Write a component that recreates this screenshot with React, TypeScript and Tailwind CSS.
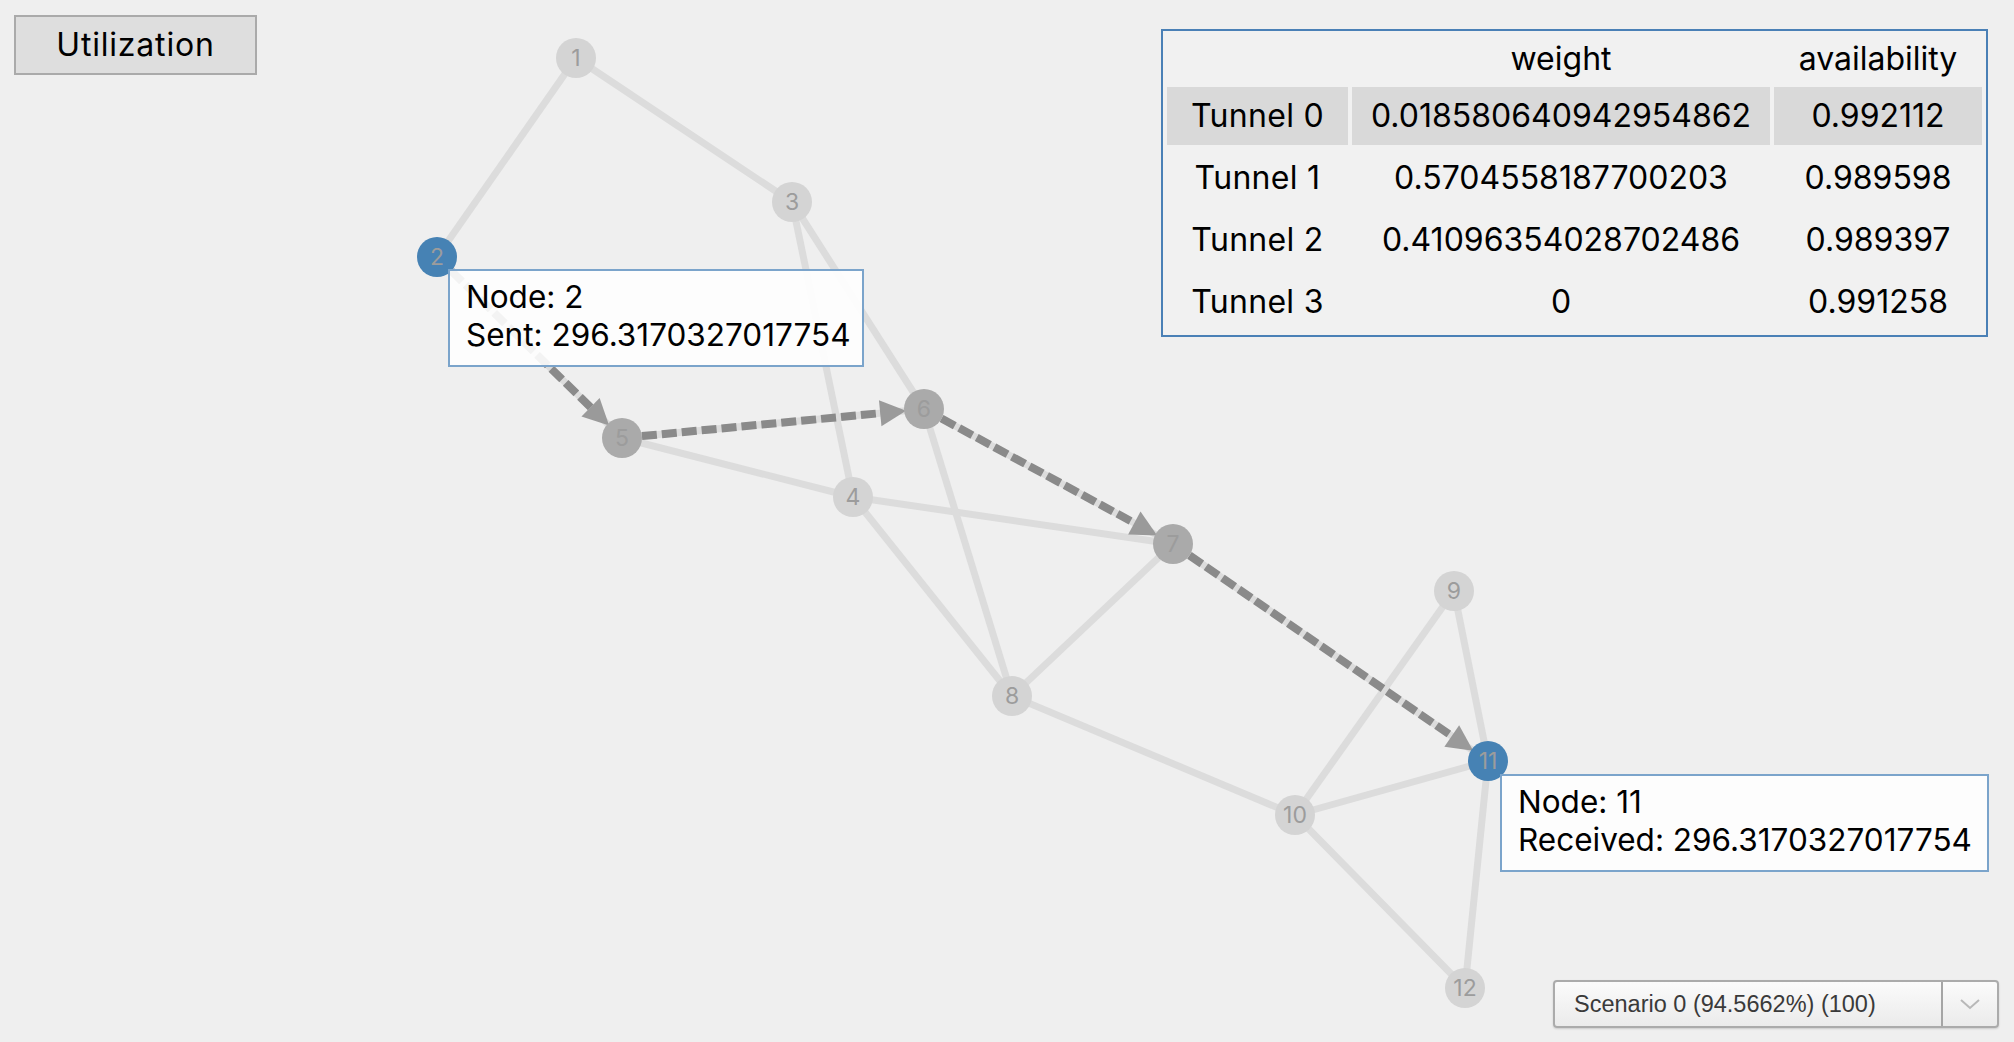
import React from "react";

type Pt = { x: number; y: number };

const nodes: Record<number, Pt> = {
  1: { x: 576, y: 58 },
  2: { x: 437, y: 257 },
  3: { x: 792, y: 202 },
  4: { x: 853, y: 497 },
  5: { x: 622, y: 438 },
  6: { x: 924, y: 409 },
  7: { x: 1173, y: 544 },
  8: { x: 1012, y: 696 },
  9: { x: 1454, y: 591 },
  10: { x: 1295, y: 815 },
  11: { x: 1488, y: 761 },
  12: { x: 1465, y: 988 },
};

const edges: [number, number][] = [
  [1, 2],
  [1, 3],
  [2, 5],
  [3, 4],
  [3, 6],
  [5, 4],
  [5, 6],
  [4, 7],
  [4, 8],
  [6, 8],
  [6, 7],
  [7, 8],
  [7, 11],
  [8, 10],
  [9, 10],
  [9, 11],
  [10, 11],
  [10, 12],
  [11, 12],
];

const path: [number, number][] = [
  [2, 5],
  [5, 6],
  [6, 7],
  [7, 11],
];

const onPath = [5, 6, 7];
const selected = [2, 11];
const R = 20;

const tunnels = [
  { name: "Tunnel 0", weight: "0.018580640942954862", avail: "0.992112" },
  { name: "Tunnel 1", weight: "0.5704558187700203", avail: "0.989598" },
  { name: "Tunnel 2", weight: "0.41096354028702486", avail: "0.989397" },
  { name: "Tunnel 3", weight: "0", avail: "0.991258" },
];

function PathEdge({ from, to }: { from: number; to: number }) {
  const s = nodes[from];
  const t = nodes[to];
  const len = Math.hypot(t.x - s.x, t.y - s.y);
  const dx = (t.x - s.x) / len;
  const dy = (t.y - s.y) / len;
  const tip = { x: t.x - dx * (R - 2), y: t.y - dy * (R - 2) };
  const base = { x: tip.x - dx * 26, y: tip.y - dy * 26 };
  const nx = -dy;
  const ny = dx;
  const pts = `${tip.x},${tip.y} ${base.x + nx * 13},${base.y + ny * 13} ${base.x - nx * 13},${base.y - ny * 13}`;
  return (
    <g>
      <line
        x1={s.x + dx * R}
        y1={s.y + dy * R}
        x2={base.x + dx * 2}
        y2={base.y + dy * 2}
        stroke="#8a8a8a"
        strokeWidth={8}
        strokeDasharray="15 5"
      />
      <polygon points={pts} fill="#9a9a9a" />
    </g>
  );
}

function Graph() {
  return (
    <svg className="absolute inset-0" width={2014} height={1042}>
      {edges.map(([a, b]) => (
        <line
          key={`${a}-${b}`}
          x1={nodes[a].x}
          y1={nodes[a].y}
          x2={nodes[b].x}
          y2={nodes[b].y}
          stroke="#dcdcdc"
          strokeWidth={7}
        />
      ))}
      {path.map(([a, b]) => (
        <PathEdge key={`p${a}-${b}`} from={a} to={b} />
      ))}
      {Object.entries(nodes).map(([id, p]) => {
        const n = Number(id);
        const fill = selected.includes(n)
          ? "#4682b4"
          : onPath.includes(n)
            ? "#aaaaaa"
            : "#d4d4d4";
        return (
          <g key={id}>
            <circle cx={p.x} cy={p.y} r={R} fill={fill} />
            <text
              x={p.x}
              y={p.y + 8}
              textAnchor="middle"
              fontSize={23}
              fill="#9c9c9c"
              fontFamily="Inter, sans-serif"
            >
              {id}
            </text>
          </g>
        );
      })}
    </svg>
  );
}

export default function App() {
  return (
    <div className="relative w-[2014px] h-[1042px] overflow-hidden bg-[#efefef] font-['Inter',sans-serif] text-black">
      <Graph />
      <div className="relative flex h-full flex-col justify-between">
        <div className="flex items-start justify-between pl-[14px] pr-[26px] pt-[15px]">
          <button className="flex h-[60px] w-[243px] items-center justify-center border-2 border-[#aaaaaa] bg-[#dedede] text-[32px] tracking-[0.8px]">
            Utilization
          </button>
          <div className="mt-[14px] border-2 border-[#4a80b6] bg-[#f1f1f1]">
            <table className="border-separate border-spacing-[4px] text-[32px]">
              <thead>
                <tr className="h-[46px]">
                  <th className="w-[181px] font-normal"></th>
                  <th className="w-[418px] font-normal">weight</th>
                  <th className="w-[208px] font-normal">availability</th>
                </tr>
              </thead>
              <tbody>
                {tunnels.map((t, i) => (
                  <tr key={t.name} className="h-[58px] text-center">
                    <td className={i === 0 ? "bg-[#d9d9d9] tracking-[0.3px]" : "tracking-[0.3px]"}>{t.name}</td>
                    <td className={i === 0 ? "bg-[#d9d9d9]" : ""}>{t.weight}</td>
                    <td className={i === 0 ? "bg-[#d9d9d9]" : ""}>{t.avail}</td>
                  </tr>
                ))}
              </tbody>
            </table>
          </div>
        </div>
        <div className="flex justify-end pb-[14px] pr-[15px]">
          <div className="flex h-[48px] w-[446px] items-stretch rounded-[4px] border-2 border-[#ababab] bg-gradient-to-b from-[#fbfbfb] to-[#ebebeb] shadow-[0_1px_2px_rgba(0,0,0,0.15)] font-['Liberation_Sans',sans-serif] text-[23.5px] text-[#3a3a3a]">
            <div className="flex flex-1 items-center pl-[19px] pt-[2px]">
              Scenario 0 (94.5662%) (100)
            </div>
            <div className="flex w-[56px] items-center justify-center border-l-2 border-[#a5a5a5]">
              <svg width="22" height="12" viewBox="0 0 22 12">
                <path d="M2 2 L11 10 L20 2" fill="none" stroke="#b8b8b8" strokeWidth="2" />
              </svg>
            </div>
          </div>
        </div>
      </div>
      <div className="absolute left-[448px] top-[269px] h-[98px] w-[416px] border-2 border-[#7ba4cb] bg-white/90 pl-[16px] pt-[7px] text-[31.5px] leading-[38px]">
        <div>Node: 2</div>
        <div>Sent: 296.3170327017754</div>
      </div>
      <div className="absolute left-[1500px] top-[774px] h-[98px] w-[489px] border-2 border-[#7ba4cb] bg-white/90 pl-[16px] pt-[7px] text-[31.5px] leading-[38px]">
        <div>Node: 11</div>
        <div>Received: 296.3170327017754</div>
      </div>
    </div>
  );
}
